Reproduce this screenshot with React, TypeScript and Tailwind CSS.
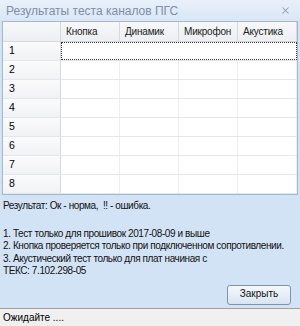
import { X } from "lucide-react"

const cols = ["Кнопка", "Динамик", "Микрофон", "Акустика"]
const rows = [1, 2, 3, 4, 5, 6, 7, 8]

export default function App() {
    return (
        <div className="w-[300px] h-[326px] flex flex-col bg-[#d3e3f6] text-black overflow-hidden" style={{ fontFamily: "'Liberation Sans', sans-serif" }}>
            {/* title */}
            <div className="shrink-0 h-[21px] flex items-center justify-between px-[6px] bg-gradient-to-b from-[#e9f0f9] to-[#d9e6f6]">
                <span className="text-[12px] text-[#7d8fa8]">Результаты теста каналов ПГС</span>
                <X size={11} strokeWidth={2.2} className="text-[#8c9bb0] mr-[3px]" />
            </div>

            {/* grid */}
            <div className="shrink-0 mx-[2px] h-[174px] bg-white border border-[#a6b7cc] overflow-hidden">
                <div className="flex h-[20px] bg-gradient-to-b from-[#f7f8fa] to-[#eceef1] border-b border-[#d5d9de]">
                    <div className="w-[58px] border-r border-[#d5d9de]" />
                    {cols.map((c) => (
                        <div key={c} className="w-[59px] border-r border-[#d5d9de] flex items-center pl-[5px] text-[10px] tracking-[-0.2px] text-[#222] whitespace-nowrap overflow-hidden">{c}</div>
                    ))}
                </div>
                {rows.map((r) => (
                    <div key={r} className="flex h-[19px] border-b border-[#e3e6ea]">
                        <div className="w-[58px] border-r border-[#d5d9de] bg-gradient-to-b from-[#fbfbfc] to-[#f1f2f4] flex items-center pl-[6px] text-[10.5px]">{r}</div>
                        {r === 1 ? (
                            <div className="w-[236px] border border-dotted border-[#333]" />
                        ) : (
                            cols.map((c) => <div key={c} className="w-[59px] border-r border-[#eceef1]" />)
                        )}
                    </div>
                ))}
            </div>

            {/* info */}
            <div className="flex-1 min-h-0 px-[3px] pt-[5px] text-[10px] leading-[12.5px] tracking-[-0.4px] text-[#111]">
                <div>Результат: Ок - норма,&nbsp; !! - ошибка.</div>
                <div className="mt-[15px]">1. Тест только для прошивок 2017-08-09 и выше</div>
                <div className="whitespace-nowrap">2. Кнопка проверяется только при подключенном сопротивлении.</div>
                <div>3. Акустический тест только для плат начиная с</div>
                <div>ТЕКС: 7.102.298-05</div>
                <div className="flex justify-end mt-[7px] pr-[6px]">
                    <button className="w-[64px] h-[20px] rounded-[3px] border border-[#7f93ab] bg-gradient-to-b from-[#f4f8fc] to-[#d9e4f0] text-[10px] tracking-normal">Закрыть</button>
                </div>
            </div>

            {/* status */}
            <div className="shrink-0 h-[18px] bg-[#f0f0f0] border-t border-[#a0a0a0] flex items-center px-[3px] text-[10px]">Ожидайте ....</div>
        </div>
    )
}
